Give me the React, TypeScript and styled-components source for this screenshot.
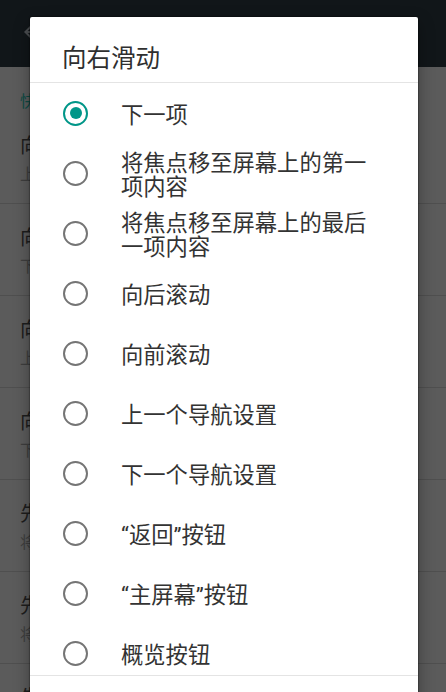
import React from "react";
import styled, { createGlobalStyle } from "styled-components";

const GlobalStyle = createGlobalStyle`
  html, body {
    margin: 0;
    padding: 0;
    background: #5b5b5b;
  }
  body {
    font-family: "Noto Sans CJK SC", "Noto Sans", sans-serif;
  }
`;

const gestures = [
  { title: "向上滑动", action: "上一项" },
  { title: "向下滑动", action: "下一项" },
  { title: "向左滑动", action: "上一项" },
  { title: "向右滑动", action: "下一项" },
  { title: "先向上再向下滑动", action: "将焦点移至屏幕上的第一项内容" },
  { title: "先向下再向上滑动", action: "将焦点移至屏幕上的最后一项内容" },
  { title: "先向左再向右滑动", action: "向后滚动" },
];

const options = [
  "下一项",
  "将焦点移至屏幕上的第一项内容",
  "将焦点移至屏幕上的最后一项内容",
  "向后滚动",
  "向前滚动",
  "上一个导航设置",
  "下一个导航设置",
  "“返回”按钮",
  "“主屏幕”按钮",
  "概览按钮",
];

function App() {
  const selected = 0;

  return (
    <>
      <GlobalStyle />
      <StScreen>
        <StAppBar>
          <svg width="24" height="24" viewBox="0 0 24 24">
            <path
              d="M20 11H7.8l5.6-5.6L12 4l-8 8 8 8 1.4-1.4L7.8 13H20v-2z"
              fill="#4a4d50"
            />
          </svg>
        </StAppBar>
        <StSectionHeader>快捷手势</StSectionHeader>
        {gestures.map((g) => (
          <StSettingRow key={g.title}>
            <StSettingTitle>{g.title}</StSettingTitle>
            <StSettingSub>{g.action}</StSettingSub>
          </StSettingRow>
        ))}

        <StDialog>
          <StDialogTitle>向右滑动</StDialogTitle>
          <StOptionList>
            {options.map((label, i) => (
              <StOption key={label}>
                <StRadio $checked={i === selected} />
                <StOptionLabel>{label}</StOptionLabel>
              </StOption>
            ))}
          </StOptionList>
          <StDialogFooter />
        </StDialog>
      </StScreen>
    </>
  );
}

export default App;

const StScreen = styled.div`
  position: relative;
  width: 446px;
  height: 692px;
  overflow: hidden;
  background: #5b5b5b;
`;

const StAppBar = styled.div`
  display: flex;
  align-items: center;
  height: 67px;
  padding-left: 20px;
  padding-bottom: 3px;
  box-sizing: border-box;
  background: #111619;
`;

const StSectionHeader = styled.div`
  height: 45px;
  padding: 22px 0 0 20px;
  box-sizing: border-box;
  font-size: 16px;
  line-height: 22px;
  color: #0d4a44;
`;

const StSettingRow = styled.div`
  display: flex;
  flex-direction: column;
  justify-content: center;
  gap: 4px;
  height: 92px;
  padding: 0 20px;
  box-sizing: border-box;
  border-bottom: 1px solid #4f4f4f;
  &:first-of-type {
    height: 91px;
  }
`;

const StSettingTitle = styled.div`
  font-size: 20px;
  line-height: 26px;
  color: #1d1d1d;
  white-space: nowrap;
`;

const StSettingSub = styled.div`
  font-size: 16px;
  line-height: 22px;
  color: #3e3e3e;
  white-space: nowrap;
`;

const StDialog = styled.div`
  position: absolute;
  left: 30px;
  top: 17px;
  width: 388px;
  bottom: -40px;
  display: flex;
  flex-direction: column;
  background: #ffffff;
  border-radius: 2px;
  box-shadow: 0 0 1px 1px rgba(0, 0, 0, 0.25), 0 6px 16px rgba(0, 0, 0, 0.35);
`;

const StDialogTitle = styled.div`
  height: 66px;
  padding: 26px 32px 0;
  box-sizing: border-box;
  font-size: 24.5px;
  line-height: 28px;
  color: #2f2f2f;
  border-bottom: 1px solid #e4e4e4;
`;

const StOptionList = styled.div`
  display: flex;
  flex-direction: column;
  height: 592px;
  overflow: hidden;
  border-bottom: 1px solid #e4e4e4;
`;

const StOption = styled.div`
  display: flex;
  align-items: center;
  flex-shrink: 0;
  height: 60px;
  padding-left: 33px;
  gap: 33px;
`;

const StRadio = styled.span<{ $checked: boolean }>`
  position: relative;
  flex-shrink: 0;
  width: 25px;
  height: 25px;
  box-sizing: border-box;
  border-radius: 50%;
  border: 2.5px solid ${(p) => (p.$checked ? "#009688" : "#757575")};
  &::after {
    content: "";
    display: ${(p) => (p.$checked ? "block" : "none")};
    position: absolute;
    left: 50%;
    top: 50%;
    width: 12px;
    height: 12px;
    margin: -6px 0 0 -6px;
    border-radius: 50%;
    background: #009688;
  }
`;

const StOptionLabel = styled.div`
  width: 252px;
  padding-top: 3px;
  font-family: Roboto, "Noto Sans CJK SC", sans-serif;
  font-size: 22.3px;
  line-height: 24px;
  color: #333333;
`;

const StDialogFooter = styled.div`
  flex: 1;
`;
